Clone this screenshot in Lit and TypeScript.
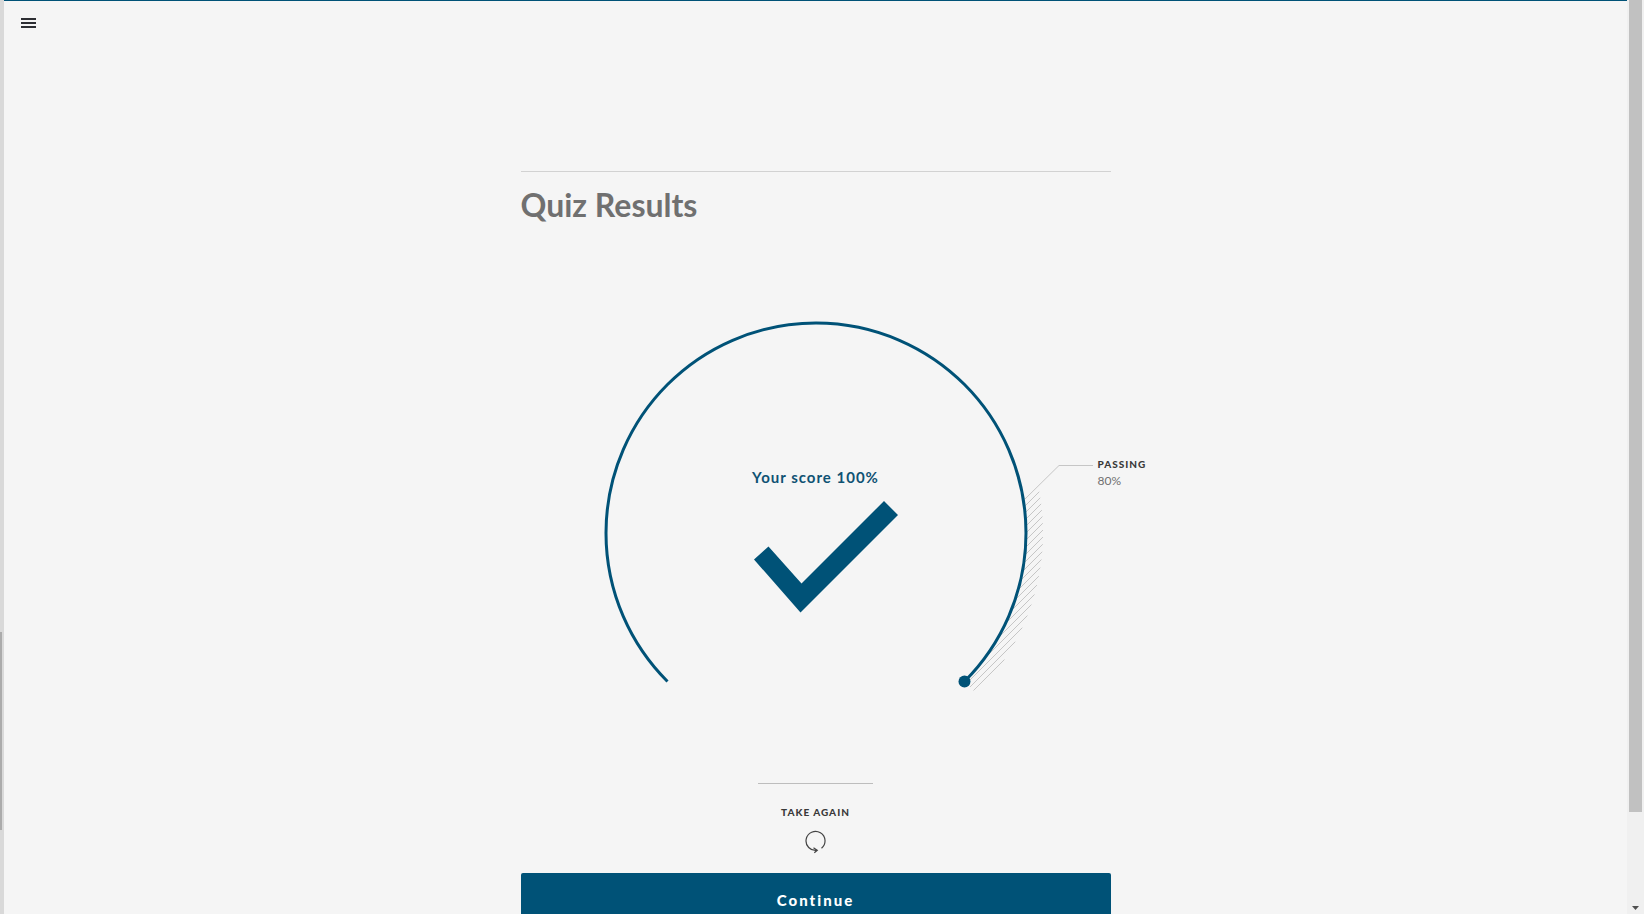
import { LitElement, html, svg, css } from "lit";
import { customElement, property } from "lit/decorators.js";

const RADIUS = 210;
const BAND = 227;

@customElement("score-gauge")
class ScoreGauge extends LitElement {
  @property({ type: Number }) score = 100;
  @property({ type: Number }) passing = 80;

  static styles = css`
    :host {
      display: block;
      width: 424px;
      position: relative;
    }
    .dial {
      display: block;
      width: 100%;
      overflow: visible;
    }
    .arc {
      fill: none;
      stroke: #005277;
      stroke-width: 3;
    }
    .solid {
      fill: #005277;
    }
    .hatch {
      fill: none;
      stroke: #c6c6c6;
      stroke-width: 1;
    }
    .score {
      position: absolute;
      top: 146px;
      left: 0;
      right: 0;
      margin: 0;
      text-align: center;
      font-size: 15px;
      line-height: 20px;
      font-weight: 700;
      letter-spacing: 1px;
      color: #0f5273;
    }
    .passing {
      position: absolute;
      top: 135px;
      left: 494px;
      margin: 0;
      font-size: 12px;
      line-height: 16px;
      color: #707070;
    }
    .caption {
      font-size: 10px;
      font-weight: 900;
      letter-spacing: 1px;
      color: #3a3a3a;
      text-transform: uppercase;
    }
    .value {
      margin: 1px 0 0;
    }
  `;

  private hatchLines() {
    const lines = [];
    for (let sum = 182; sum <= 315; sum += 7) {
      const outer = (sum + Math.sqrt(2 * BAND * BAND - sum * sum)) / 2;
      const inside = 2 * RADIUS * RADIUS - sum * sum;
      const inner = inside > 0 ? (sum + Math.sqrt(inside)) / 2 : sum / 2;
      lines.push(
        svg`<line class="hatch" x1=${inner} y1=${sum - inner} x2=${outer} y2=${sum - outer} />`
      );
    }
    return lines;
  }

  render() {
    return html`
      <svg class="dial" viewBox="-212 -212 424 372" aria-hidden="true">
        ${this.hatchLines()}
        <path class="hatch" d="M209 -34 L243 -67.500 H277" />
        <path class="arc" d="M-148.500 148.500 A210 210 0 1 1 148.500 148.500" />
        <circle class="solid" cx="148.500" cy="148.500" r="6" />
        <path class="solid" d="M-62 26.500 L-47.500 13.500 L-14.500 50.500 L68 -32 L82 -18 L-15.500 79.500 Z" />
      </svg>
      <p class="score">Your score ${this.score}%</p>
      <dl class="passing">
        <dt class="caption">Passing</dt>
        <dd class="value">${this.passing}%</dd>
      </dl>
    `;
  }
}

@customElement("app-root")
class AppRoot extends LitElement {
  static styles = css`
    :host {
      display: flex;
      height: 100vh;
      overflow: hidden;
      background: #f5f5f5;
      font-family: Lato, "Open Sans", sans-serif;
    }
    .outline-edge {
      flex: none;
      width: 4px;
      box-sizing: border-box;
      background: #d9d9d9;
      display: grid;
      grid-template-rows: 632fr 198fr 84fr;
    }
    .outline-thumb {
      grid-row: 2;
      width: 2px;
      background: #ababab;
    }
    .page {
      flex: 1;
      min-width: 0;
      overflow: hidden;
      border-top: 1px solid #005277;
    }
    .menu {
      display: block;
      margin: 8px 0 0 11px;
      padding: 8px 6px;
      border: 0;
      background: none;
    }
    .bars {
      display: block;
      width: 16px;
      height: 12px;
    }
    .quiz {
      box-sizing: border-box;
      width: 590px;
      max-width: 100%;
      margin: 134px auto 0;
      border-top: 1px solid #d2d2d2;
      display: flex;
      flex-direction: column;
      align-items: center;
    }
    .title {
      align-self: stretch;
      margin: 11px 0 0;
      font-size: 32px;
      line-height: 44px;
      font-weight: 700;
      color: #707070;
    }
    .gauge {
      margin-top: 94px;
    }
    .divider {
      width: 115px;
      height: 1px;
      margin: 90px 0 0;
      border: 0;
      background: #bdbdbd;
    }
    .again {
      display: flex;
      flex-direction: column;
      align-items: center;
      gap: 10px;
      margin-top: 20px;
      padding: 0;
      border: 0;
      background: none;
      font: 900 10px/16px Lato, "Open Sans", sans-serif;
      letter-spacing: 1px;
      color: #3a3a3a;
      text-transform: uppercase;
    }
    .retry {
      display: block;
      width: 22px;
      height: 24px;
      fill: none;
      stroke: #444;
      stroke-width: 1.2;
    }
    .continue {
      align-self: stretch;
      height: 54px;
      margin-top: 19px;
      padding: 0;
      border: 0;
      border-radius: 2px;
      background: #005277;
      color: #fff;
      font: 900 15px/20px Lato, "Open Sans", sans-serif;
      letter-spacing: 2px;
    }
    .scroll {
      flex: none;
      width: 17px;
      box-sizing: border-box;
      padding: 0 2px;
      background: #f0f0f0;
      display: flex;
      flex-direction: column;
      align-items: center;
      justify-content: space-between;
    }
    .thumb {
      width: 100%;
      height: 88.8%;
      background: #c1c1c1;
    }
    .down {
      width: 7px;
      height: 4px;
      margin-bottom: 4px;
      fill: #505050;
    }
  `;

  render() {
    return html`
      <div class="outline-edge"><div class="outline-thumb"></div></div>
      <main class="page">
        <button class="menu" aria-label="Menu">
          <svg class="bars" viewBox="0 0 16 12" fill="#2d2e33">
            <path d="M0 1h15v2H0zM0 5h15v2H0zM0 9h15v2H0z" />
          </svg>
        </button>
        <section class="quiz">
          <h1 class="title">Quiz Results</h1>
          <score-gauge class="gauge" score="100" passing="80"></score-gauge>
          <hr class="divider" />
          <button class="again">
            Take again
            <svg class="retry" viewBox="0 0 22 24">
              <path d="M16.500 18.300A9.500 9.500 0 1 0 12 20.300M8.500 17.700L12.300 20.200L9.300 22.800" />
            </svg>
          </button>
          <button class="continue">Continue</button>
        </section>
      </main>
      <div class="scroll" aria-hidden="true">
        <div class="thumb"></div>
        <svg class="down" viewBox="0 0 7 4"><path d="M0 0h7L3.500 4z" /></svg>
      </div>
    `;
  }
}
